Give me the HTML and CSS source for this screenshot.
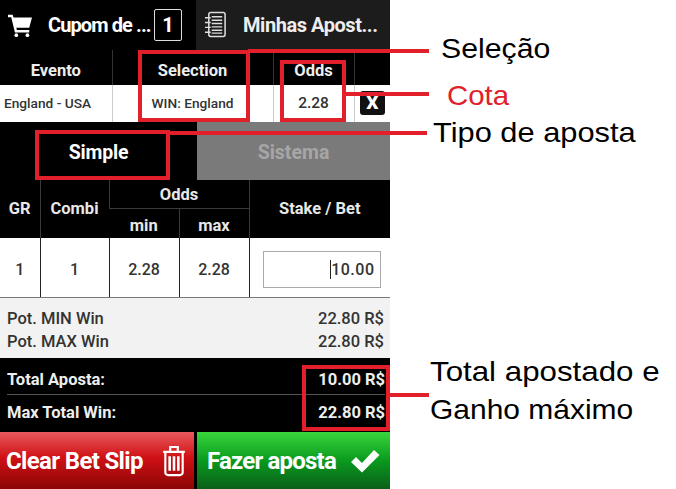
FILE: index.html
```html
<!DOCTYPE html>
<html lang="en">

<head>
    <meta charset="UTF-8">
    <meta name="viewport" content="width=device-width, initial-scale=1.0">
    <title>Cupom de apostas</title>
    <link rel="stylesheet" href="styles.css">
</head>

<body>
    <div class="page">
        <div class="slip">
            <div class="top-tabs">
                <div class="top-tab active">
                    <svg class="cart-icon" viewBox="0 0 28 26" aria-hidden="true">
                        <path d="M1 2h5l1 3h20l-3 11H10l.6 2.5H24V21H8.5L4.5 4.5H1z" fill="#fff" />
                        <circle cx="10" cy="24" r="2" fill="#fff" />
                        <circle cx="22" cy="24" r="2" fill="#fff" />
                    </svg>
                    <span class="tab-label">Cupom de ...</span>
                    <span class="count-box">1</span>
                </div>
                <div class="top-tab other">
                    <svg class="notes-icon" viewBox="0 0 24 28" aria-hidden="true">
                        <rect x="5" y="1.5" width="17" height="25" rx="2" fill="none" stroke="#ddd" stroke-width="1.6" />
                        <path d="M8 6h11M8 9.5h11M8 13h11M8 16.5h11M8 20h11M8 23h11" stroke="#ddd" stroke-width="1.5" />
                        <path d="M1 7h6M1 12h6M1 17h6M1 22h6" stroke="#ddd" stroke-width="1.5" />
                    </svg>
                    <span class="tab-label">Minhas Apost...</span>
                </div>
            </div>

            <table class="event-table">
                <thead>
                    <tr>
                        <th class="col-event">Evento</th>
                        <th class="col-selection">Selection</th>
                        <th class="col-odds">Odds</th>
                        <th class="col-remove"></th>
                    </tr>
                </thead>
                <tbody>
                    <tr>
                        <td class="event-name">England - USA</td>
                        <td>WIN: England</td>
                        <td class="odds-value">2.28</td>
                        <td><span class="remove-btn">X</span></td>
                    </tr>
                </tbody>
            </table>

            <div class="type-tabs">
                <div class="type-tab active">Simple</div>
                <div class="type-tab disabled">Sistema</div>
            </div>

            <table class="stake-table">
                <colgroup>
                    <col class="col-gr">
                    <col class="col-combi">
                    <col class="col-min">
                    <col class="col-max">
                    <col>
                </colgroup>
                <thead>
                    <tr>
                        <th rowspan="2">GR</th>
                        <th rowspan="2">Combi</th>
                        <th colspan="2">Odds</th>
                        <th rowspan="2">Stake / Bet</th>
                    </tr>
                    <tr>
                        <th class="small-head">min</th>
                        <th class="small-head">max</th>
                    </tr>
                </thead>
                <tbody>
                    <tr>
                        <td>1</td>
                        <td>1</td>
                        <td>2.28</td>
                        <td>2.28</td>
                        <td>
                            <div class="stake-input"><span class="caret">10.00</span></div>
                        </td>
                    </tr>
                </tbody>
            </table>

            <div class="potential">
                <div class="line"><span>Pot. MIN Win</span><span>22.80 R$</span></div>
                <div class="line"><span>Pot. MAX Win</span><span>22.80 R$</span></div>
            </div>

            <div class="totals">
                <div class="line"><span>Total Aposta:</span><span>10.00 R$</span></div>
                <div class="line"><span>Max Total Win:</span><span>22.80 R$</span></div>
            </div>

            <div class="actions">
                <div class="action clear">
                    <span>Clear Bet Slip</span>
                    <svg class="trash-icon" viewBox="0 0 24 30" aria-hidden="true">
                        <path d="M2 7h20M8.5 6V2.500h7V6" fill="none" stroke="#fff" stroke-width="2" />
                        <path d="M4 7.500V26a2.500 2.500 0 0 0 2.500 2.500h11A2.500 2.500 0 0 0 20 26V7.500" fill="none" stroke="#fff" stroke-width="2" />
                        <path d="M8 11v13.500M12 11v13.500M16 11v13.500" stroke="#fff" stroke-width="2.400" />
                    </svg>
                </div>
                <div class="action confirm">
                    <span>Fazer aposta</span>
                    <svg class="check-icon" viewBox="0 0 30 24" aria-hidden="true">
                        <path d="M1 13l5-5 6 6L24 1l5.500 5L12 23.500z" fill="#fff" />
                    </svg>
                </div>
            </div>
        </div>

        <!-- red marks and notes over the slip -->
        <div class="mark mark-selection"></div>
        <div class="mark mark-odds"></div>
        <div class="mark mark-simple"></div>
        <div class="mark mark-totals"></div>
        <div class="wire wire-selection"></div>
        <div class="wire wire-odds"></div>
        <div class="wire wire-simple"></div>
        <div class="wire wire-totals"></div>

        <div class="note note-selection">Seleção</div>
        <div class="note note-odds">Cota</div>
        <div class="note note-simple">Tipo de aposta</div>
        <div class="note note-total">Total apostado e</div>
        <div class="note note-gain">Ganho máximo</div>
    </div>
</body>

</html>
```

FILE: styles.css
```css
* {
    box-sizing: border-box;
}

body {
    margin: 0;
    background-color: white;
    font-family: "Roboto", "Liberation Sans", sans-serif;
    overflow: hidden;
}

.page {
    position: relative;
    width: 676px;
    height: 489px;
}

.slip {
    display: flex;
    flex-direction: column;
    width: 390px;
    height: 489px;
    background-color: black;
}

/* top tabs */
.top-tabs {
    display: flex;
    height: 50px;
}

.top-tab {
    display: flex;
    align-items: center;
    color: white;
    font-size: 20px;
    font-weight: 700;
}

.top-tab.active {
    width: 196px;
    padding: 0 14px 0 7px;
    background-color: black;
}

.top-tab.other {
    width: 194px;
    padding-left: 8px;
    background-color: #1c1c1c;
    color: #eee;
}

.tab-label {
    white-space: nowrap;
    letter-spacing: -0.45px;
}

.top-tab.active .tab-label {
    letter-spacing: -0.9px;
}

.cart-icon {
    width: 26px;
    height: 24px;
    margin-right: 15px;
    flex: none;
}

.notes-icon {
    width: 23px;
    height: 27px;
    margin-right: 16px;
    flex: none;
}

.count-box {
    width: 28px;
    height: 32px;
    margin-left: auto;
    border: 1px solid #ddd;
    border-radius: 2px;
    text-align: center;
    line-height: 30px;
    flex: none;
}

/* event table */
table {
    width: 100%;
    border-collapse: collapse;
    table-layout: fixed;
}

.event-table th {
    height: 35px;
    padding: 7px 0 0;
    border-left: 1px solid #333;
    background-color: black;
    color: #eee;
    font-size: 16.5px;
    font-weight: 700;
}

.event-table td {
    height: 37px;
    padding: 0;
    border-left: 1px solid #ccc;
    background-color: white;
    color: #333;
    font-size: 13.7px;
    font-weight: 500;
    text-align: center;
}

.event-table th:first-child,
.event-table td:first-child {
    border-left: 0;
}

.col-event {
    width: 112px;
}

.col-selection {
    width: 161px;
}

.col-odds {
    width: 81px;
}

.event-table .event-name {
    padding-left: 4px;
    text-align: left;
    white-space: nowrap;
}

.event-table .odds-value {
    font-size: 15.5px;
}

.remove-btn {
    display: block;
    width: 25px;
    height: 24px;
    margin: 0 auto;
    border-radius: 3px;
    background-color: #111;
    color: white;
    font-size: 19px;
    font-weight: 900;
    line-height: 24px;
}

/* simple / sistema */
.type-tabs {
    display: flex;
    height: 58px;
}

.type-tab {
    display: flex;
    align-items: center;
    justify-content: center;
    padding-top: 3px;
    font-weight: 700;
}

.type-tab.active {
    width: 197px;
    color: white;
    font-size: 19.5px;
    letter-spacing: -0.2px;
}

.type-tab.disabled {
    width: 193px;
    background-color: #7a7a7a;
    color: #a6a6a6;
    font-size: 19.5px;
}

/* stake table */
.stake-table th {
    height: 29px;
    padding: 0;
    border-left: 1px solid #3a3a3a;
    background-color: black;
    color: #e8e8e8;
    font-size: 16.5px;
    font-weight: 700;
}

.stake-table th:first-child {
    border-left: 0;
}

.stake-table th[colspan] {
    border-bottom: 1px solid #3a3a3a;
}

.stake-table .small-head {
    padding-top: 3px;
    border-left: 1px solid #3a3a3a;
}

.col-gr {
    width: 40px;
}

.col-combi {
    width: 69px;
}

.col-min,
.col-max {
    width: 70px;
}

.stake-table td {
    height: 60px;
    padding: 3px 0 0;
    border-left: 1px solid #222;
    border-bottom: 1px solid #777;
    background-color: white;
    color: #333;
    font-size: 16px;
    font-weight: 500;
    text-align: center;
}

.stake-table td:first-child {
    border-left: 0;
}

.stake-input {
    width: 118px;
    height: 37px;
    margin-left: 13px;
    padding-right: 5px;
    border: 1px solid #aaa;
    text-align: right;
    line-height: 35px;
    letter-spacing: 0.5px;
}

.caret {
    border-left: 1px solid #222;
}

/* win lines */
.line {
    display: flex;
    justify-content: space-between;
}

.potential {
    display: flex;
    flex-direction: column;
    justify-content: center;
    gap: 4px;
    height: 60px;
    padding: 3px 6px 0 7px;
    background-color: #f2f2f2;
    color: #333;
    font-size: 16.5px;
    font-weight: 500;
    line-height: 19px;
}

.totals {
    height: 74px;
    padding: 0 5px 0 7px;
    background-color: black;
    color: #eee;
    font-size: 16.5px;
    font-weight: 700;
}

.totals .line {
    align-items: center;
    height: 36px;
    padding-bottom: 2px;
}

.totals .line:first-child {
    height: 37px;
    padding: 7px 0 0;
    border-bottom: 1px solid #555;
}

/* buttons */
.actions {
    display: flex;
    justify-content: space-between;
    height: 57px;
}

.action {
    display: flex;
    align-items: center;
    justify-content: space-between;
    color: white;
    font-size: 24px;
    font-weight: 700;
    letter-spacing: -0.8px;
    white-space: nowrap;
}

.action.clear {
    width: 194px;
    padding: 0 7px 0 6px;
    background: linear-gradient(#ea5a5e, #cf1014 45%, #8c0606);
    letter-spacing: -0.65px;
}

.action.confirm {
    width: 193px;
    padding: 0 10px;
    background: linear-gradient(#39d63c, #0a9a1e 50%, #0a5f1a);
}

.trash-icon {
    width: 26px;
    height: 33px;
}

.check-icon {
    width: 30px;
    height: 24px;
}

/* annotations */
.mark {
    position: absolute;
    border: 4px solid #e2202c;
}

.mark-selection {
    left: 138px;
    top: 50px;
    width: 112px;
    height: 72px;
}

.mark-odds {
    left: 280px;
    top: 60px;
    width: 66px;
    height: 62px;
}

.mark-simple {
    left: 35px;
    top: 130px;
    width: 135px;
    height: 50px;
}

.mark-totals {
    left: 302px;
    top: 365px;
    width: 88px;
    height: 66px;
}

.wire {
    position: absolute;
    height: 4px;
    background-color: #e2202c;
}

.wire-selection {
    left: 248px;
    top: 49px;
    width: 181px;
}

.wire-odds {
    left: 342px;
    top: 92px;
    width: 87px;
}

.wire-simple {
    left: 168px;
    top: 131px;
    width: 259px;
}

.wire-totals {
    left: 389px;
    top: 393px;
    width: 40px;
}

.note {
    position: absolute;
    font-family: "Liberation Sans", Arial, sans-serif;
    font-size: 28px;
    line-height: 36px;
    color: black;
    white-space: nowrap;
    transform-origin: left center;
}

.note-selection {
    left: 441px;
    top: 31px;
    transform: scaleX(1.08);
}

.note-odds {
    left: 447px;
    top: 78px;
    color: #e2202c;
    transform: scaleX(1.05);
}

.note-simple {
    left: 433px;
    top: 115px;
    transform: scaleX(1.1);
}

.note-total {
    left: 430px;
    top: 354px;
    transform: scaleX(1.117);
}

.note-gain {
    left: 430px;
    top: 392px;
    transform: scaleX(1.07);
}
```
